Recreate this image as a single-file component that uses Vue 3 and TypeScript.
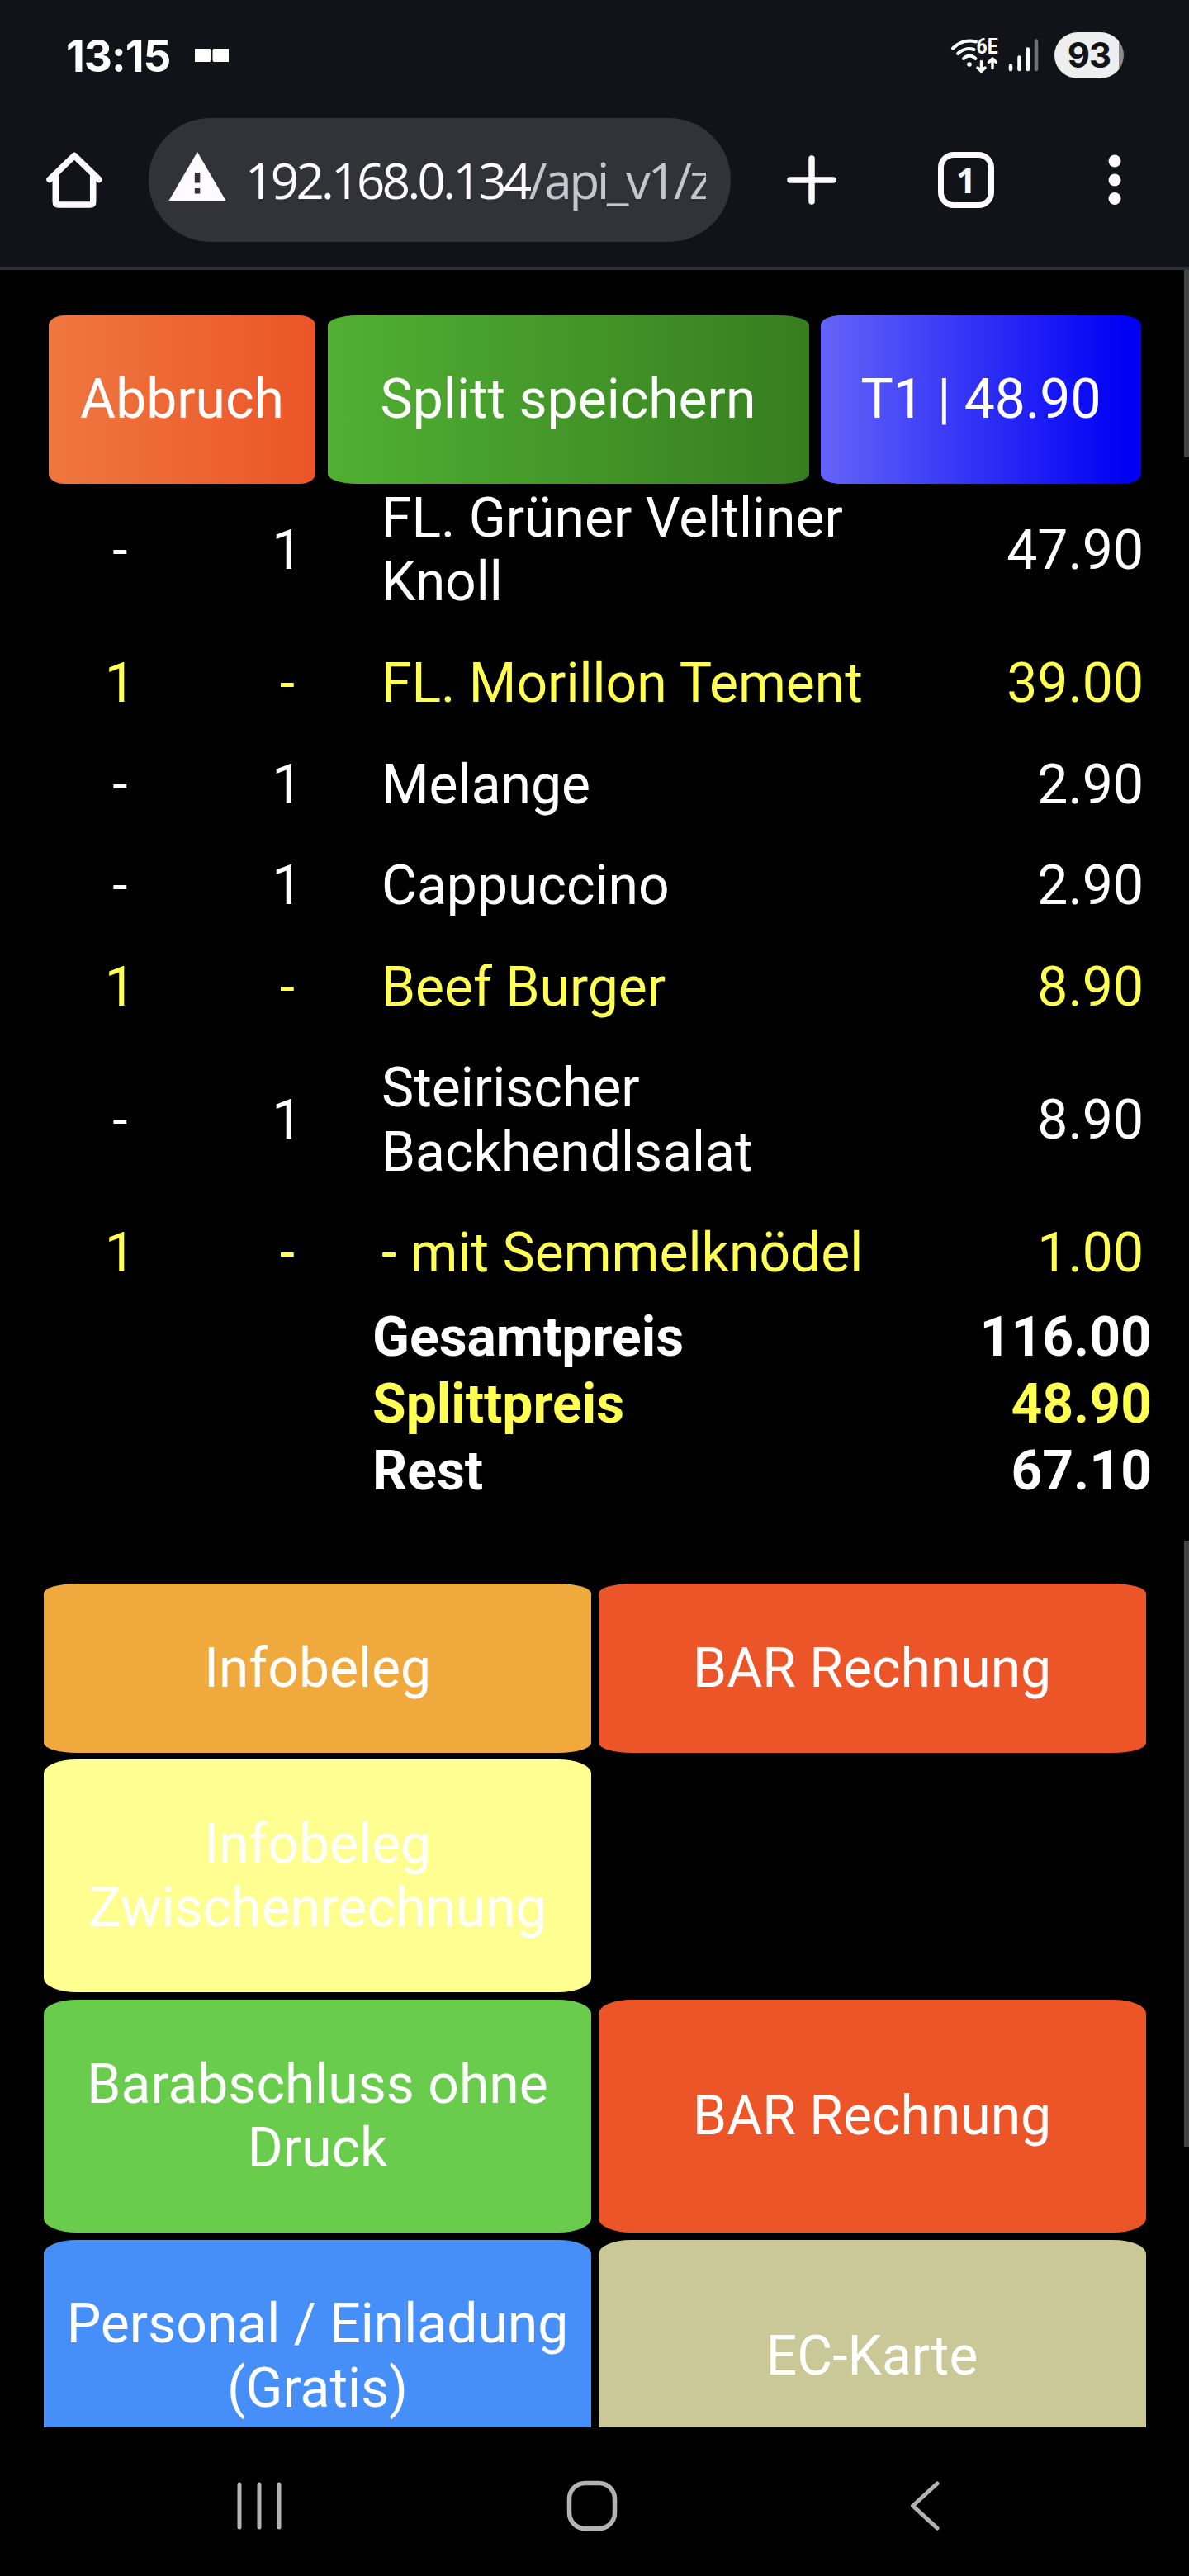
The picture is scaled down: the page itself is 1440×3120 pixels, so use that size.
<script setup lang="ts">
interface Item {
  split: string
  rest: string
  name: string
  price: string
  marked?: boolean
}
interface Total {
  label: string
  value: string
  marked?: boolean
}
interface Action {
  label: string
  tone: string
}

const items: Item[] = [
  { split: '-', rest: '1', name: 'FL. Grüner Veltliner Knoll', price: '47.90' },
  { split: '1', rest: '-', name: 'FL. Morillon Tement', price: '39.00', marked: true },
  { split: '-', rest: '1', name: 'Melange', price: '2.90' },
  { split: '-', rest: '1', name: 'Cappuccino', price: '2.90' },
  { split: '1', rest: '-', name: 'Beef Burger', price: '8.90', marked: true },
  { split: '-', rest: '1', name: 'Steirischer Backhendlsalat', price: '8.90' },
  { split: '1', rest: '-', name: '- mit Semmelknödel', price: '1.00', marked: true },
]

const totals: Total[] = [
  { label: 'Gesamtpreis', value: '116.00' },
  { label: 'Splittpreis', value: '48.90', marked: true },
  { label: 'Rest', value: '67.10' },
]

const actions: (Action | null)[] = [
  { label: 'Infobeleg', tone: 'amber' },
  { label: 'BAR Rechnung', tone: 'red' },
  { label: 'Infobeleg Zwischenrechnung', tone: 'yellow' },
  null,
  { label: 'Barabschluss ohne Druck', tone: 'green' },
  { label: 'BAR Rechnung', tone: 'red' },
  { label: 'Personal / Einladung (Gratis)', tone: 'blue' },
  { label: 'EC-Karte', tone: 'sand' },
]
</script>

<template>
  <div class="phone">
    <header class="chrome">
      <div class="status">
        <span class="clock">13:15</span>
        <svg class="notif" width="42" height="16" viewBox="0 0 42 16" fill="#fff">
          <path d="M0 0h18.500l1 2v12l-1 2H0zM22.500 0H41v16H22.500l-1-2V2z" />
        </svg>
        <svg class="signals" width="108" height="44" viewBox="1150 45 108 44" fill="none" stroke="#fff" stroke-width="4" stroke-linecap="round">
          <path d="M1154 58.500Q1166 46.500 1182 50.500M1160 65Q1169 56.500 1179.500 60M1167 71Q1174 64 1181.500 71" />
          <circle cx="1174" cy="78" r="2.800" fill="#fff" stroke="none" />
          <text x="1182.500" y="65" class="gen" textLength="26" lengthAdjust="spacingAndGlyphs">6E</text>
          <path stroke-width="3.500" stroke-linejoin="round" d="M1188.500 74.500v12M1184 82l4.500 4.500 4.500-4.500M1202 82.500V71M1197.500 75.500l4.500-4.500 4.500 4.500" />
          <path stroke-width="4.500" d="M1224 79.500v4.500M1234.500 69.500V84M1244.800 59.500V84" />
          <path stroke-width="4.500" stroke="#717174" d="M1255 49.500V84" />
        </svg>
        <span class="battery">93</span>
      </div>

      <div class="toolbar">
        <svg class="home" width="70" height="70" viewBox="55 183 70 70" fill="none" stroke="#fdfbff" stroke-width="7.500">
          <path stroke-linecap="round" stroke-linejoin="round" d="M60 217.500L90 188.500l30 29" />
          <path stroke-linejoin="round" d="M67.300 210v34.500q0 3.500 3.500 3.500h38.400q3.500 0 3.500-3.500V210" />
        </svg>
        <div class="omnibox">
          <svg class="warn" width="70" height="60" viewBox="0 0 70 60">
            <path fill="#fdfbff" d="M35 0l34.500 59H.5z" />
            <path fill="#323338" d="M31.800 25h6.500v12.500h-6.500zM31.800 44h6.500v6.500h-6.500z" />
          </svg>
          <div class="url"><span class="host">192.168.0.134</span><span class="path">/api_v1/z</span></div>
        </div>
        <svg class="plus" width="60" height="60" viewBox="0 0 60 60" stroke="#fdfbff" stroke-width="7.500" stroke-linecap="round">
          <path d="M30 4v52M4 30h52" />
        </svg>
        <div class="tabs">1</div>
        <svg class="more" width="16" height="62" viewBox="0 0 16 62" fill="#fdfbff">
          <circle cx="8" cy="8" r="7.500" /><circle cx="8" cy="31" r="7.500" /><circle cx="8" cy="53.500" r="7.500" />
        </svg>
      </div>
    </header>

    <main class="page">
      <div class="top">
        <button class="btn cancel">Abbruch</button>
        <button class="btn save">Splitt speichern</button>
        <button class="btn table">T1 | 48.90</button>
      </div>

      <div class="list">
        <div v-for="item in items" :key="item.name" class="row" :class="{ marked: item.marked }">
          <span class="qty">{{ item.split }}</span>
          <span class="qty">{{ item.rest }}</span>
          <span class="name">{{ item.name }}</span>
          <span class="price">{{ item.price }}</span>
        </div>
      </div>

      <div class="totals">
        <div v-for="t in totals" :key="t.label" class="total" :class="{ marked: t.marked }">
          <span>{{ t.label }}</span><span>{{ t.value }}</span>
        </div>
      </div>

      <div class="actions">
        <template v-for="(a, i) in actions" :key="i">
          <button v-if="a" class="btn" :class="a.tone">{{ a.label }}</button>
          <span v-else></span>
        </template>
      </div>

      <i class="thumb thumb-list"></i>
      <i class="thumb thumb-actions"></i>
    </main>

    <nav class="navbar">
      <svg width="54" height="58" viewBox="0 0 54 58" stroke="#b3b3b3" stroke-width="5" stroke-linecap="round">
        <path d="M3 3v52M27 3v52M51 3v52" />
      </svg>
      <svg class="nav-home" width="62" height="62" viewBox="0 0 62 62" fill="none" stroke="#b3b3b3" stroke-width="5.500">
        <rect x="3.500" y="3.500" width="55" height="55" rx="19" />
      </svg>
      <svg width="38" height="62" viewBox="0 0 38 62" fill="none" stroke="#b3b3b3" stroke-width="5" stroke-linecap="round" stroke-linejoin="round">
        <path d="M34 4L4.500 31 34 58" />
      </svg>
    </nav>
  </div>
</template>

<style>
body {
  margin: 0;
  background: #000;
}
</style>

<style scoped>
.phone {
  width: 1440px;
  height: 3120px;
  display: flex;
  flex-direction: column;
  overflow: hidden;
  background: #000;
  color: #fff;
  font-family: Roboto, sans-serif;
  font-size: 66px;
  line-height: 77.4px;
}
.chrome {
  box-sizing: border-box;
  height: 327px;
  flex: none;
  background: #121318;
  border-bottom: 4px solid #303136;
}
.status {
  box-sizing: border-box;
  height: 134px;
  padding-left: 80px;
  display: flex;
  align-items: center;
}
.clock {
  width: 156px;
  padding-top: 1px;
  font: 700 53px/60px Inter, sans-serif;
  letter-spacing: -1px;
}
.signals {
  margin-left: 872px;
  overflow: visible;
}
.gen {
  font: 700 25px Roboto, sans-serif;
  fill: #fff;
  stroke: none;
}
.battery {
  width: 84px;
  height: 56px;
  margin-left: 19px;
  border-radius: 28px;
  background: linear-gradient(90deg, #eee 78px, #8b8b8d 78px);
  color: #121318;
  font: 700 42px/56px Inter, sans-serif;
  letter-spacing: -1px;
  text-align: center;
}
.toolbar {
  display: flex;
  align-items: center;
  height: 168px;
  padding-left: 55px;
}
.omnibox {
  box-sizing: border-box;
  width: 705px;
  height: 150px;
  margin-left: 55px;
  padding: 0 30px 0 24px;
  border-radius: 75px;
  background: #323338;
  display: flex;
  align-items: center;
}
.warn {
  flex: none;
  margin-top: -9px;
}
.url {
  margin-left: 23px;
  width: 558px;
  overflow: hidden;
  white-space: nowrap;
  font: 400 60px/84px "Open Sans", sans-serif;
  color: #fdfbff;
}
.host {
  letter-spacing: -3.600px;
}
.path {
  color: #c6c6d0;
  letter-spacing: -3.200px;
}
.plus {
  margin-left: 68px;
}
.tabs {
  box-sizing: border-box;
  width: 68px;
  height: 68px;
  margin-left: 123px;
  border: 7.500px solid #fdfbff;
  border-radius: 19px;
  font: 700 42px/53px "Open Sans", sans-serif;
  text-align: center;
  color: #fdfbff;
}
.more {
  margin-left: 138px;
}
.page {
  position: relative;
  height: 2613px;
  flex: none;
  overflow: hidden;
}
.btn {
  margin: 0;
  border: 0;
  padding: 63.600px 20px;
  border-radius: 6%;
  color: #fff;
  font: inherit;
}
.top {
  display: grid;
  grid-template-columns: 323px 583px 388px;
  column-gap: 14.500px;
  padding: 55px 0 0 59px;
}
.top .btn {
  padding: 63.400px 0;
}
.cancel {
  background: linear-gradient(90deg, #ef773f, #eb5528);
}
.save {
  background: linear-gradient(90deg, #50b032, #377d20);
}
.table {
  background: linear-gradient(90deg, #6464f8, #0000f5 95%);
}
.list {
  padding-top: 2.800px;
}
.row {
  display: grid;
  grid-template-columns: 202.500px 202.500px 608px 1fr;
  align-items: center;
  padding: 0 55px 45.200px 44px;
}
.qty {
  text-align: center;
}
.name {
  padding-left: 13px;
}
.price {
  text-align: right;
}
.marked {
  color: #ffff54;
}
.totals {
  padding: 0 45px 0 451px;
  margin-top: -21.800px;
  font-weight: 700;
}
.total {
  display: flex;
  justify-content: space-between;
  line-height: 80.700px;
}
.actions {
  display: grid;
  grid-template-columns: 663px 663px;
  gap: 8.600px;
  padding: 96px 0 0 53px;
}
.amber { background: #f0a93c; }
.red { background: #eb5528; }
.yellow { background: #ffff91; }
.green { background: #69cc4d; }
.blue { background: #468ff8; }
.sand { background: #c9c896; }
/* scroll indicators of the two scrolling panes */
.thumb {
  position: absolute;
  right: 0;
  width: 6px;
  background: #444;
}
.thumb-list {
  top: 0;
  height: 227px;
}
.thumb-actions {
  top: 1539px;
  height: 734px;
}
.navbar {
  box-sizing: border-box;
  height: 180px;
  padding: 9px 0 0 287px;
  display: flex;
  align-items: center;
}
.nav-home {
  margin: 0 353px 0 345px;
}
</style>
